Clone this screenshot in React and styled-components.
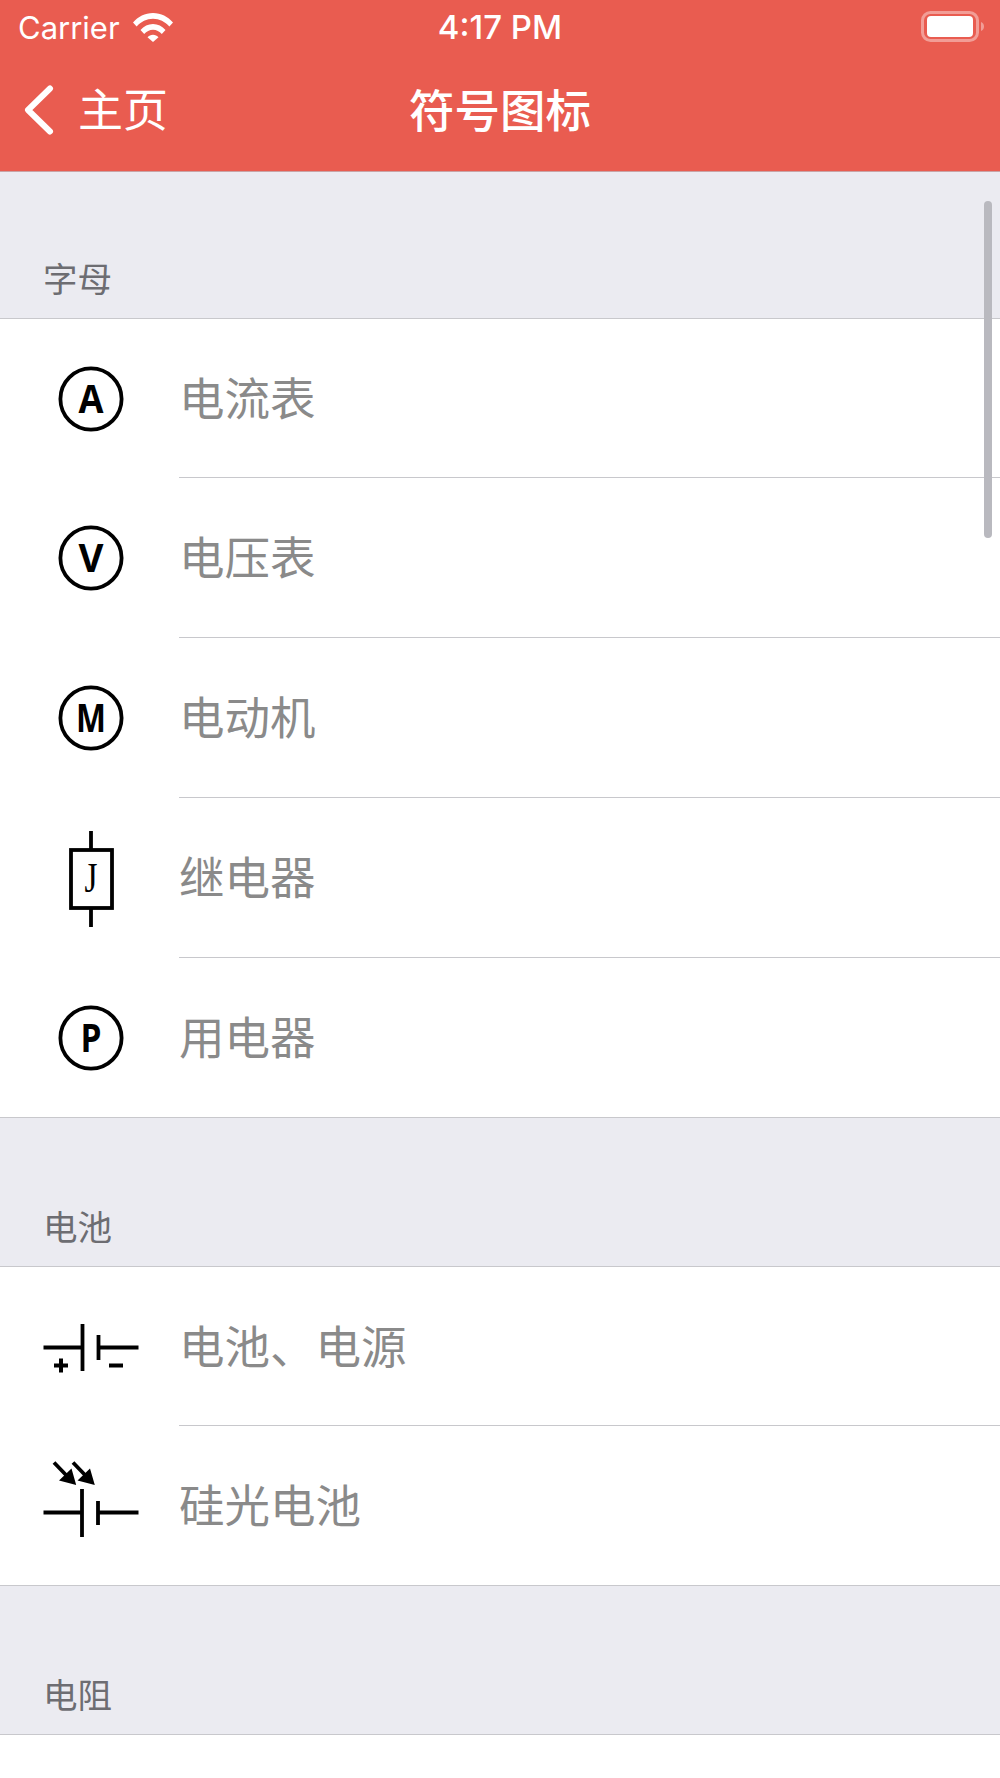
import React from 'react';
import styled, { createGlobalStyle } from 'styled-components';

const GlobalStyle = createGlobalStyle`
  html, body { margin: 0; padding: 0; background: #ffffff; }
`;

const cjk = `'Noto Sans CJK SC', 'Noto Sans', sans-serif`;

const Page = styled.div`
  position: relative;
  width: 1000px;
  height: 1778px;
  overflow: hidden;
  background: #ffffff;
  font-family: ${cjk};
`;

const Header = styled.header`
  height: 171px;
  background: #e95c50;
  border-bottom: 1px solid #c9a3a6;
  color: #ffffff;
`;

const StatusBar = styled.div`
  height: 54px;
  display: grid;
  grid-template-columns: 1fr auto 1fr;
  align-items: center;
  font-family: Inter, 'Liberation Sans', sans-serif;
  font-size: 31px;
`;

const StatusLeft = styled.div`
  display: flex;
  align-items: center;
  gap: 13px;
  padding-left: 18px;
`;

const StatusTime = styled.div`
  font-size: 33px;
  font-weight: 500;
`;

const StatusRight = styled.div`
  display: flex;
  justify-content: flex-end;
  padding-right: 15px;
`;

const NavBar = styled.nav`
  height: 117px;
  display: grid;
  grid-template-columns: 1fr auto 1fr;
  align-items: start;
  padding-top: 26px;
  font-size: 45px;
  line-height: 56px;
`;

const BackLink = styled.div`
  display: flex;
  align-items: center;
  gap: 24px;
  padding-left: 24px;
  svg { margin-top: 4px; }
`;

const Title = styled.div`
  font-size: 45.500px;
  font-weight: 500;
`;

const SectionHeader = styled.div`
  height: ${(p) => (p.$first ? 147 : 149)}px;
  box-sizing: border-box;
  display: flex;
  align-items: flex-end;
  padding: 0 0 18px 43px;
  background: #ebebf1;
  border-bottom: 1px solid #c8c8cc;
  color: #6d6d72;
  font-size: 34.500px;
  line-height: 46px;
`;

const List = styled.div`
  background: #ffffff;
  border-bottom: 1px solid #c8c8cc;
`;

const Row = styled.div`
  height: 160px;
  box-sizing: border-box;
  display: flex;
  align-items: center;
  &:first-child, &:last-child { height: 159px; }
`;

const IconCell = styled.div`
  width: 179px;
  flex: none;
  display: flex;
  justify-content: center;
  svg { display: block; margin-left: 2px; }
`;

const Label = styled.div`
  flex: 1;
  height: 100%;
  box-sizing: border-box;
  display: flex;
  align-items: center;
  padding-bottom: 5px;
  color: #8a8a8a;
  font-size: 45.500px;
  border-bottom: ${(p) => (p.$last ? 'none' : '1px solid #c8c8cc')};
`;

const ScrollThumb = styled.div`
  position: absolute;
  top: 201px;
  right: 8px;
  width: 8px;
  height: 337px;
  border-radius: 4px;
  background: #b9b9bf;
`;

const WifiIcon = () => (
  <svg width="40" height="29" viewBox="0 0 40 29" fill="#ffffff">
    <path d="M0 9.500C5 3.600 12 0 20 0s15 3.600 20 9.500l-3.600 4C32 8.700 26.300 5.800 20 5.800S8 8.700 3.600 13.500z" />
    <path d="M7.500 17C10.800 13.300 15.200 11 20 11s9.200 2.300 12.500 6l-3.700 4C26.500 18.400 23.400 16.800 20 16.800s-6.500 1.600-8.800 4.200z" />
    <path d="M14.500 24.200C15.900 22.700 17.800 21.800 20 21.800s4.100.9 5.500 2.400L20 29z" />
  </svg>
);

const BatteryIcon = () => (
  <svg width="64" height="32" viewBox="0 0 64 32">
    <rect x="1.500" y="1.500" width="55" height="28" rx="8" fill="none" stroke="#ffffff" strokeOpacity="0.4" strokeWidth="3" />
    <rect x="6" y="5" width="46" height="21" rx="4" fill="#ffffff" />
    <path d="M60 11c2 .8 3 2.500 3 4.500s-1 3.700-3 4.500z" fill="#ffffff" fillOpacity="0.4" />
  </svg>
);

const ChevronIcon = () => (
  <svg width="30" height="50" viewBox="0 0 30 50" fill="none">
    <path d="M26 3.500L4 25l22 21.500" stroke="#ffffff" strokeWidth="6" strokeLinecap="round" strokeLinejoin="round" />
  </svg>
);

const MeterIcon = ({ letter, width }) => (
  <svg width="100" height="100" viewBox="0 0 100 100">
    <circle cx="50" cy="50" r="30.600" fill="none" stroke="#000000" strokeWidth="3.800" />
    <text
      x="50"
      y="63.500"
      textAnchor="middle"
      textLength={width}
      lengthAdjust="spacingAndGlyphs"
      fontFamily="'Open Sans', sans-serif"
      fontWeight="700"
      fontSize="39"
      fill="#000000"
    >
      {letter}
    </text>
  </svg>
);

const RelayIcon = () => (
  <svg width="100" height="100" viewBox="0 0 100 100" fill="none" stroke="#000000" strokeWidth="3.800">
    <rect x="30" y="22" width="41" height="58" />
    <path d="M50 3v19M50 80v19" />
    <text
      x="50"
      y="64"
      textAnchor="middle"
      textLength="13"
      lengthAdjust="spacingAndGlyphs"
      fontFamily="'Liberation Serif', serif"
      fontSize="42"
      fill="#000000"
      stroke="none"
    >
      J
    </text>
  </svg>
);

const BatteryCellIcon = () => (
  <svg width="100" height="100" viewBox="0 0 100 100" fill="none" stroke="#000000" strokeWidth="3.800">
    <path d="M2.500 50.500H41.500M41.500 27v47M57.500 38v25M57.500 50.500H97.500" />
    <path d="M13 68.500h14M20 61.500v14M68 68.500h14" strokeWidth="4" />
  </svg>
);

const PhotoCellIcon = () => (
  <svg width="100" height="100" viewBox="0 0 100 100" fill="none" stroke="#000000" strokeWidth="3.800">
    <path d="M2.500 56.500H41M41 33v48M57 45v24M57 56.500H97.500" />
    <path d="M13 6.500L26 20M32 6.500L45 20" strokeWidth="3.800" />
    <path d="M35.200 29L18 24.500 30.500 12.500zM53.800 29L36.500 24.500 49 12.500z" fill="#000000" stroke="none" />
  </svg>
);

const groups = [
  {
    title: '字母',
    items: [
      { name: '电流表', icon: <MeterIcon letter="A" width={25} /> },
      { name: '电压表', icon: <MeterIcon letter="V" width={25} /> },
      { name: '电动机', icon: <MeterIcon letter="M" width={30} /> },
      { name: '继电器', icon: <RelayIcon /> },
      { name: '用电器', icon: <MeterIcon letter="P" width={21} /> },
    ],
  },
  {
    title: '电池',
    items: [
      { name: '电池、电源', icon: <BatteryCellIcon /> },
      { name: '硅光电池', icon: <PhotoCellIcon /> },
    ],
  },
];

export default function App() {
  return (
    <Page>
      <GlobalStyle />
      <Header>
        <StatusBar>
          <StatusLeft>
            Carrier
            <WifiIcon />
          </StatusLeft>
          <StatusTime>4:17 PM</StatusTime>
          <StatusRight>
            <BatteryIcon />
          </StatusRight>
        </StatusBar>
        <NavBar>
          <BackLink>
            <ChevronIcon />
            主页
          </BackLink>
          <Title>符号图标</Title>
        </NavBar>
      </Header>

      {groups.map((group, i) => (
        <section key={group.title}>
          <SectionHeader $first={i === 0}>{group.title}</SectionHeader>
          <List>
            {group.items.map((item, j) => (
              <Row key={item.name}>
                <IconCell>{item.icon}</IconCell>
                <Label $last={j === group.items.length - 1}>{item.name}</Label>
              </Row>
            ))}
          </List>
        </section>
      ))}
      <SectionHeader>电阻</SectionHeader>

      <ScrollThumb />
    </Page>
  );
}
